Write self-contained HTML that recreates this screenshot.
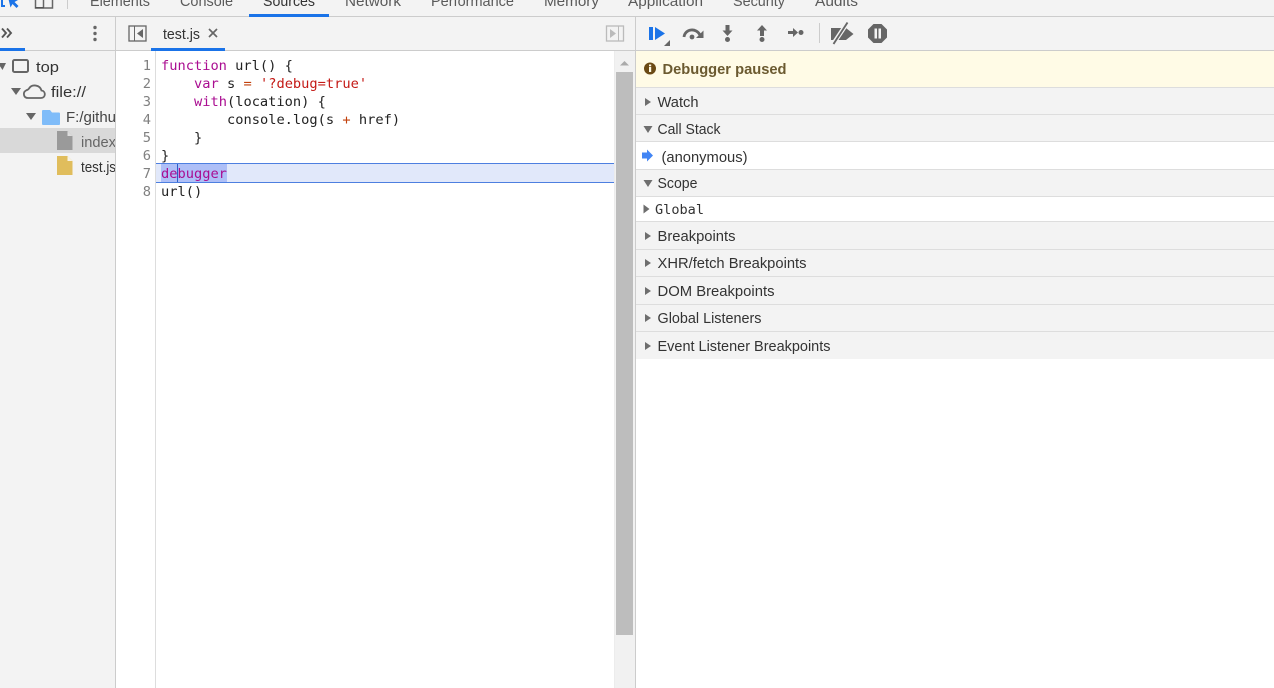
<!DOCTYPE html>
<html><head><meta charset="utf-8"><style>
html,body{margin:0;padding:0;width:1274px;height:688px;overflow:hidden;background:#fff}
svg{display:block}
.u{font-family:"Liberation Sans",sans-serif;font-size:15px;fill:#333}
.m{font-family:"DejaVu Sans Mono","Liberation Mono",monospace;font-size:13.7px;fill:#222}
.n{font-family:"DejaVu Sans Mono","Liberation Mono",monospace;font-size:13.7px;fill:#808080;text-anchor:end}
.k{fill:#aa0d91}.s{fill:#c41a16}.o{fill:#c2410c}
</style></head><body>
<svg width="1274" height="688" viewBox="0 0 1274 688" xmlns="http://www.w3.org/2000/svg">
<rect width="1274" height="688" fill="#fff"/>
<!-- top toolbar -->
<rect width="1274" height="17" fill="#f3f3f3"/>
<rect y="16" width="1274" height="1" fill="#ccc"/>
<path d="M2 0v6h3" fill="none" stroke="#1a73e8" stroke-width="2"/>
<path d="M8 -3L18 0 14.500 2 18.500 6 16.500 8 12.500 4 10.500 7.500z" fill="#1a73e8"/>
<path d="M35.500 -2h17v10h-17zM43.500 -2v10" fill="none" stroke="#666" stroke-width="1.500"/>
<rect x="35" y="7" width="9" height="1.500" fill="#555"/>
<rect x="67" y="0" width="1" height="9" fill="#ccc"/>
<g class="u">
<text x="90" y="6" textLength="60" lengthAdjust="spacingAndGlyphs" style="fill:#5a5a5a">Elements</text>
<text x="180" y="6" textLength="53" lengthAdjust="spacingAndGlyphs" style="fill:#5a5a5a">Console</text>
<text x="263" y="6" textLength="52" lengthAdjust="spacingAndGlyphs" style="fill:#333">Sources</text>
<text x="345" y="6" textLength="56" lengthAdjust="spacingAndGlyphs" style="fill:#5a5a5a">Network</text>
<text x="431" y="6" textLength="83" lengthAdjust="spacingAndGlyphs" style="fill:#5a5a5a">Performance</text>
<text x="544" y="6" textLength="55" lengthAdjust="spacingAndGlyphs" style="fill:#5a5a5a">Memory</text>
<text x="628" y="6" textLength="75" lengthAdjust="spacingAndGlyphs" style="fill:#5a5a5a">Application</text>
<text x="733" y="6" textLength="52" lengthAdjust="spacingAndGlyphs" style="fill:#5a5a5a">Security</text>
<text x="815" y="6" textLength="43" lengthAdjust="spacingAndGlyphs" style="fill:#5a5a5a">Audits</text>
</g>
<rect x="249" y="14" width="80" height="3" fill="#1a73e8"/>
<!-- second row -->
<rect y="17" width="1274" height="33" fill="#f3f3f3"/>
<rect y="50" width="1274" height="1" fill="#ccc"/>
<rect x="0" y="48" width="25" height="3" fill="#1a73e8"/>
<rect x="151" y="48" width="74" height="3" fill="#1a73e8"/>
<path d="M2 28.500l4 4.500-4 4.500M7 28.500l4 4.500-4 4.500" fill="none" stroke="#555" stroke-width="1.900"/>
<circle cx="95" cy="27.500" r="1.700" fill="#666"/><circle cx="95" cy="33.500" r="1.700" fill="#666"/><circle cx="95" cy="39.500" r="1.700" fill="#666"/>
<rect x="129" y="26" width="17" height="15" fill="none" stroke="#666" stroke-width="1.300"/>
<rect x="134" y="26" width="1" height="15" fill="#666"/>
<path d="M143 29v9l-6-4.500z" fill="#666"/>
<text x="163" y="39" class="u" textLength="37" lengthAdjust="spacingAndGlyphs">test.js</text>
<path d="M209 29l8 8M217 29l-8 8" stroke="#666" stroke-width="1.700" fill="none"/>
<rect x="606.500" y="26" width="17" height="15" fill="none" stroke="#bbb" stroke-width="1.300"/>
<rect x="618" y="26" width="1" height="15" fill="#bbb"/>
<path d="M610 29v9l6-4.500z" fill="#bbb"/>
<!-- debugger toolbar -->
<rect x="649" y="27" width="4" height="13" fill="#1a73e8"/>
<path d="M655 27l10 6.500-10 6.500z" fill="#1a73e8"/>
<path d="M664 46l6-6v6z" fill="#666"/>
<path d="M684 37C685 28.500 696.500 27.500 700 35" fill="none" stroke="#666" stroke-width="2.800"/>
<path d="M703.500 30.500v7.500h-7.500z" fill="#666"/>
<circle cx="692" cy="37" r="2.400" fill="#666"/>
<path d="M725.500 25h4v5.500h3l-5 5.500-5-5.500h3z" fill="#666"/><circle cx="727.500" cy="39.500" r="2.500" fill="#666"/>
<path d="M760 36v-5.500h-3l5-5.500 5 5.500h-3V36z" fill="#666"/><circle cx="762" cy="39.500" r="2.500" fill="#666"/>
<path d="M788 31h5v-3l5 4.500-5 4.500v-3h-5z" fill="#666"/><circle cx="801" cy="32.500" r="2.500" fill="#666"/>
<rect x="819" y="23" width="1" height="20" fill="#ccc"/>
<path d="M831 28h15l7.500 6-7.500 6h-15z" fill="#666"/>
<path d="M833.500 43.500l14-21" stroke="#f3f3f3" stroke-width="4.500"/>
<path d="M833.500 44l14-21.500" stroke="#666" stroke-width="1.900"/>
<path d="M873.500 24h8l5.500 5.500v8l-5.500 5.500h-8l-5.500-5.500v-8z" fill="#666"/>
<rect x="874.500" y="28.500" width="2.500" height="10" fill="#f3f3f3"/><rect x="878.500" y="28.500" width="2.500" height="10" fill="#f3f3f3"/>
<!-- navigator -->
<rect y="51" width="115" height="637" fill="#f3f3f3"/>
<rect x="115" y="17" width="1" height="671" fill="#ccc"/>
<rect y="128" width="115" height="25" fill="#d9d9d9"/>
<path d="M-2 63h8l-3.500 7z" fill="#666"/>
<rect x="13" y="60" width="15" height="12" rx="1.500" fill="none" stroke="#666" stroke-width="2"/>
<text x="36" y="72" class="u" textLength="23" lengthAdjust="spacingAndGlyphs">top</text>
<path d="M11 88h10l-5 7z" fill="#666"/>
<path d="M28 98h13c5 0 5-7 .5-7.500C40 85 32 83.500 29 88.500c-1 1.500-1 1-3 2-3.500 2-2.500 7.500 2 7.500z" fill="none" stroke="#666" stroke-width="1.800"/>
<text x="51" y="97" class="u" textLength="35" lengthAdjust="spacingAndGlyphs">file://</text>
<path d="M26 113h10l-5 7z" fill="#666"/>
<path d="M42 111q0-1 1-1h7l2 2.500h7q1 0 1 1V124q0 1-1 1H43q-1 0-1-1z" fill="#7fbcf9"/>
<text x="66" y="122" class="u" textLength="50" lengthAdjust="spacingAndGlyphs" style="fill:#444">F:/githu</text>
<path d="M57 131h10.500l5 5V150H57z" fill="#9a9a9a"/><path d="M67.500 131v5h5z" fill="#ddd"/>
<text x="81" y="147" class="u" textLength="35" lengthAdjust="spacingAndGlyphs" style="fill:#666">index</text>
<path d="M57 156h10.500l5 5V175H57z" fill="#e0bd5c"/><path d="M67.500 156v5h5z" fill="#f8f3e3"/>
<text x="81" y="172" class="u" textLength="35" lengthAdjust="spacingAndGlyphs">test.js</text>
<rect x="115" y="51" width="1" height="637" fill="#ccc"/>
<!-- editor -->
<rect x="155" y="51" width="1" height="637" fill="#ddd"/>
<rect x="156" y="163" width="458" height="20" fill="#e1e8fa"/>
<rect x="156" y="163" width="458" height="1" fill="#4d7fe0"/>
<rect x="156" y="182" width="458" height="1" fill="#4d7fe0"/>
<rect x="161" y="164" width="66" height="18" fill="#aebff7"/>
<rect x="177" y="164" width="1" height="18" fill="#2b5fc9"/>
<g class="n">
<text x="151" y="70">1</text><text x="151" y="88">2</text><text x="151" y="106">3</text><text x="151" y="124">4</text><text x="151" y="142">5</text><text x="151" y="160">6</text><text x="151" y="178">7</text><text x="151" y="196">8</text>
</g>
<g class="m" xml:space="preserve">
<text x="161" y="70"><tspan class="k">function</tspan> url() {</text>
<text x="194" y="88"><tspan class="k">var</tspan> s <tspan class="o">=</tspan> <tspan class="s">'?debug=true'</tspan></text>
<text x="194" y="106"><tspan class="k">with</tspan>(location) {</text>
<text x="227" y="124">console.log(s <tspan class="o">+</tspan> href)</text>
<text x="194" y="142">}</text>
<text x="161" y="160">}</text>
<text x="161" y="178"><tspan class="k">debugger</tspan></text>
<text x="161" y="196">url()</text>
</g>
<!-- scrollbar -->
<rect x="614" y="51" width="21" height="637" fill="#f1f1f1"/>
<rect x="614" y="51" width="1" height="637" fill="#ececec"/>
<path d="M620 65.500l4.500-4.500 4.500 4.500z" fill="#aaa"/>
<rect x="616" y="72" width="17" height="563" fill="#bdbdbd"/>
<rect x="635" y="17" width="1" height="671" fill="#ccc"/>
<!-- right panel -->
<rect x="636" y="51" width="638" height="36" fill="#fffbe6"/>
<rect x="636" y="87" width="638" height="1" fill="#ddd"/>
<circle cx="650" cy="68.500" r="6" fill="#6b4a14"/>
<rect x="649" y="67" width="2.200" height="5" fill="#fffbe6"/><rect x="649" y="64.500" width="2.200" height="1.800" fill="#fffbe6"/>
<text x="662.500" y="74" class="u" textLength="124" lengthAdjust="spacingAndGlyphs" style="font-weight:bold;fill:#6b5a30">Debugger paused</text>

<rect x="636" y="88" width="638" height="26" fill="#f3f3f3"/><rect x="636" y="114" width="638" height="1" fill="#ddd"/>
<rect x="636" y="115" width="638" height="26" fill="#f3f3f3"/><rect x="636" y="141" width="638" height="1" fill="#ddd"/>
<rect x="636" y="169" width="638" height="1" fill="#ddd"/>
<rect x="636" y="170" width="638" height="26" fill="#f3f3f3"/><rect x="636" y="196" width="638" height="1" fill="#ddd"/>
<rect x="636" y="221" width="638" height="1" fill="#ddd"/>
<rect x="636" y="222" width="638" height="27" fill="#f3f3f3"/><rect x="636" y="249" width="638" height="1" fill="#ddd"/>
<rect x="636" y="250" width="638" height="26" fill="#f3f3f3"/><rect x="636" y="276" width="638" height="1" fill="#ddd"/>
<rect x="636" y="277" width="638" height="27" fill="#f3f3f3"/><rect x="636" y="304" width="638" height="1" fill="#ddd"/>
<rect x="636" y="305" width="638" height="26" fill="#f3f3f3"/><rect x="636" y="331" width="638" height="1" fill="#ddd"/>
<rect x="636" y="332" width="638" height="27" fill="#f3f3f3"/>

<g fill="#6e6e6e">
<path d="M645 98v8l6-4z"/>
<path d="M643.500 126h9l-4.500 7z"/>
<path d="M643.500 180h9l-4.500 7z"/>
<path d="M643.500 204.500v9l6-4.500z"/>
<path d="M645 232v8l6-4z"/>
<path d="M645 259v8l6-4z"/>
<path d="M645 287v8l6-4z"/>
<path d="M645 314v8l6-4z"/>
<path d="M645 342v8l6-4z"/>
</g>
<path d="M642 152.500h5v-3l6 6-6 6v-3h-5z" fill="#4285f4"/>
<g class="u">
<text x="657.500" y="107" textLength="41" lengthAdjust="spacingAndGlyphs">Watch</text>
<text x="657.500" y="134" textLength="63" lengthAdjust="spacingAndGlyphs">Call Stack</text>
<text x="661.500" y="162" textLength="86" lengthAdjust="spacingAndGlyphs">(anonymous)</text>
<text x="657.500" y="188" textLength="40" lengthAdjust="spacingAndGlyphs">Scope</text>
<text x="657.500" y="241" textLength="78" lengthAdjust="spacingAndGlyphs">Breakpoints</text>
<text x="657.500" y="268" textLength="149" lengthAdjust="spacingAndGlyphs">XHR/fetch Breakpoints</text>
<text x="657.500" y="296" textLength="117" lengthAdjust="spacingAndGlyphs">DOM Breakpoints</text>
<text x="657.500" y="323" textLength="104" lengthAdjust="spacingAndGlyphs">Global Listeners</text>
<text x="657.500" y="351" textLength="173" lengthAdjust="spacingAndGlyphs">Event Listener Breakpoints</text>
</g>
<text x="655" y="214" textLength="49" lengthAdjust="spacingAndGlyphs" style="font-family:'DejaVu Sans Mono',monospace;font-size:13px;fill:#333">Global</text>
</svg>
</body></html>
